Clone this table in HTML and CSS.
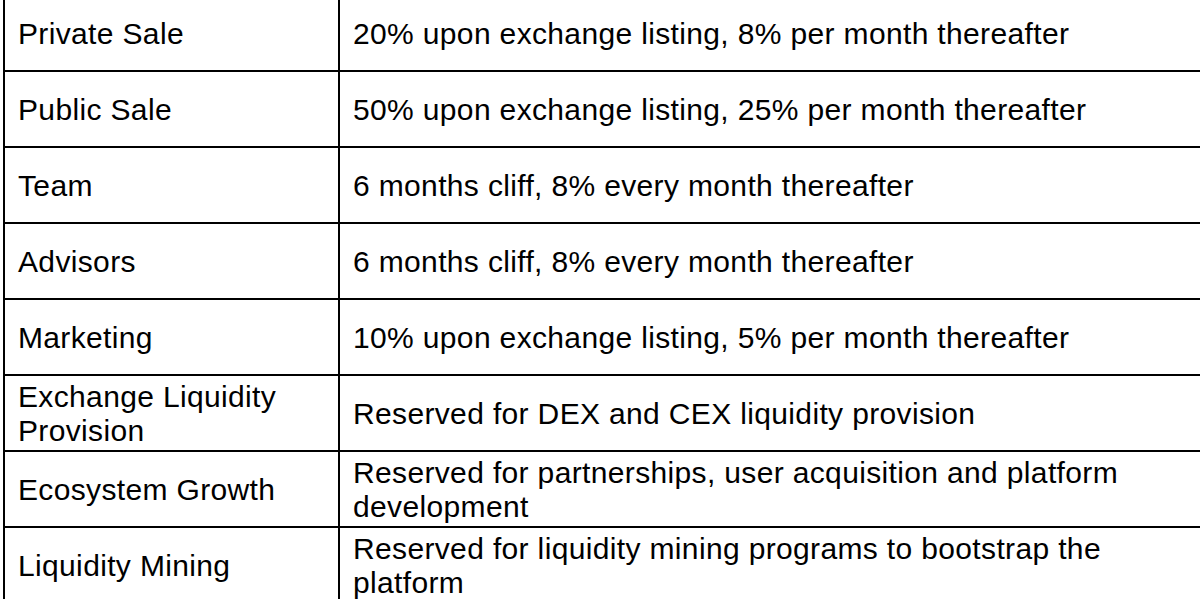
FILE: index.html
```html
<!DOCTYPE html>
<html>
<head>
<meta charset="utf-8">
<link rel="stylesheet" href="styles.css">
</head>
<body>
<table class="vesting">
  <tr><td class="name">Private Sale</td><td class="desc">20% upon exchange listing, 8% per month thereafter</td></tr>
  <tr><td class="name">Public Sale</td><td class="desc">50% upon exchange listing, 25% per month thereafter</td></tr>
  <tr><td class="name">Team</td><td class="desc">6 months cliff, 8% every month thereafter</td></tr>
  <tr><td class="name">Advisors</td><td class="desc">6 months cliff, 8% every month thereafter</td></tr>
  <tr><td class="name">Marketing</td><td class="desc">10% upon exchange listing, 5% per month thereafter</td></tr>
  <tr><td class="name">Exchange Liquidity Provision</td><td class="desc">Reserved for DEX and CEX liquidity provision</td></tr>
  <tr><td class="name">Ecosystem Growth</td><td class="desc">Reserved for partnerships, user acquisition and platform development</td></tr>
  <tr><td class="name">Liquidity Mining</td><td class="desc">Reserved for liquidity mining programs to bootstrap the platform</td></tr>
</table>
</body>
</html>
```
FILE: styles.css
```css
html, body {
  margin: 0;
  padding: 0;
  background: #fff;
  overflow: hidden;
}
body {
  width: 1200px;
  height: 599px;
  font-family: "Liberation Sans", Arial, sans-serif;
  color: #000;
}
.vesting {
  border-collapse: collapse;
  margin-top: -6px;
  margin-left: 3px;
  width: 1260px;
  table-layout: fixed;
  font-size: 30px;
  letter-spacing: 0.35px;
  line-height: 34px;
}
.vesting td {
  border: 2px solid #000;
  height: 74px;
  padding: 2px 12px 0 13px;
  vertical-align: middle;
  box-sizing: border-box;
}
.vesting tr {
  height: 76px;
}
.vesting .name {
  width: 335px;
}
.vesting .desc {
  padding-left: 13px;
  padding-right: 120px;
}
```
